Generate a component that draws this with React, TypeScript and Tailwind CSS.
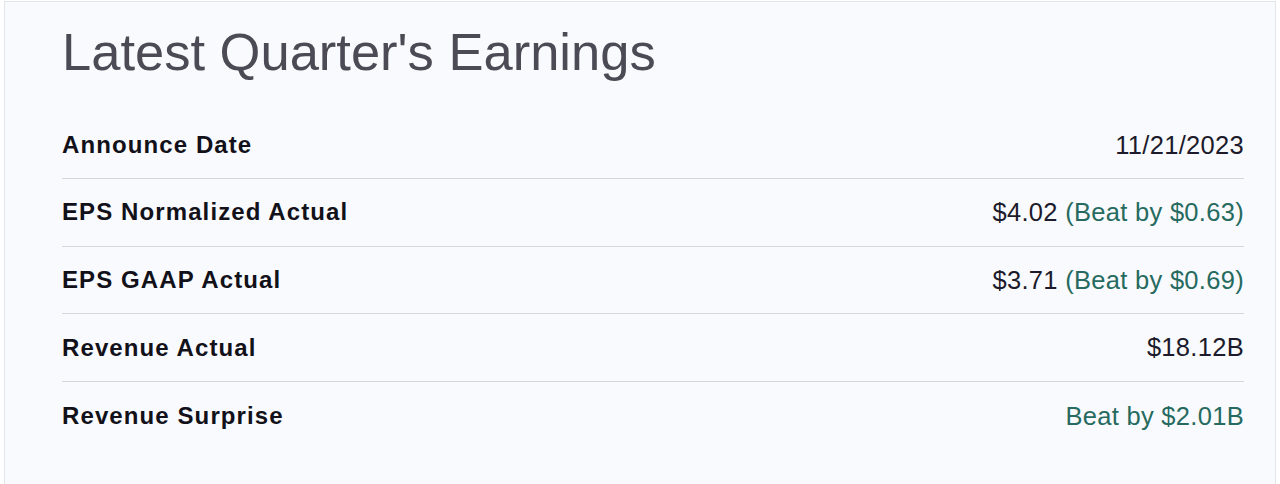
import React from "react";

const rows: { label: string; value: React.ReactNode }[] = [
  { label: "Announce Date", value: <span className="text-[#1c1a2b]">11/21/2023</span> },
  {
    label: "EPS Normalized Actual",
    value: (
      <>
        <span className="text-[#1c1a2b]">$4.02</span>{" "}
        <span className="text-[#266a60]">(Beat by $0.63)</span>
      </>
    ),
  },
  {
    label: "EPS GAAP Actual",
    value: (
      <>
        <span className="text-[#1c1a2b]">$3.71</span>{" "}
        <span className="text-[#266a60]">(Beat by $0.69)</span>
      </>
    ),
  },
  { label: "Revenue Actual", value: <span className="text-[#1c1a2b]">$18.12B</span> },
  { label: "Revenue Surprise", value: <span className="text-[#266a60]">Beat by $2.01B</span> },
];

export default function App() {
  return (
    <div className="w-[1280px] h-[484px] overflow-hidden bg-white pt-[1px] pl-[4px] pr-[4px]">
      <div className="h-[500px] border border-[#e4e5ea] bg-[#f9fafd] pl-[57px] pr-[31px] pt-[24px]">
        <h1
          className="text-[52.5px] leading-none text-[#4c4b55]"
          style={{ fontFamily: '"Liberation Sans", Arial, sans-serif' }}
        >
          Latest Quarter&apos;s Earnings
        </h1>
        <div className="mt-[33px] flex flex-col">
          {rows.map((r, i) => (
            <div
              key={r.label}
              className={
                "flex h-[67.6px] items-center justify-between " +
                (i < rows.length - 1 ? "border-b border-[#d6d7dc]" : "")
              }
            >
              <span
                className="text-[24px] font-bold tracking-[1.1px] text-[#12111a]"
                style={{ fontFamily: '"Liberation Sans", Arial, sans-serif' }}
              >
                {r.label}
              </span>
              <span
                className="text-[25.5px] tracking-[0.3px]"
                style={{ fontFamily: '"Liberation Sans", Arial, sans-serif' }}
              >
                {r.value}
              </span>
            </div>
          ))}
        </div>
      </div>
    </div>
  );
}
